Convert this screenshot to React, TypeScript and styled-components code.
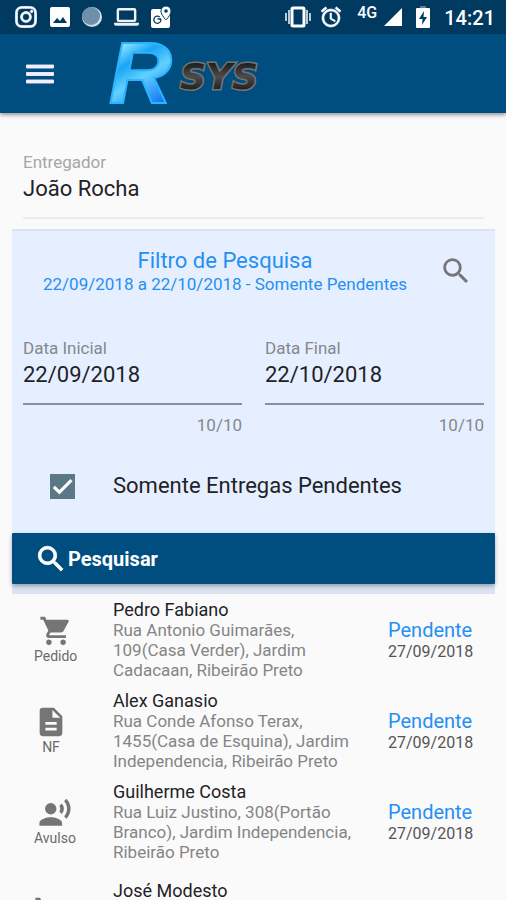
import React, { useState } from "react";
import styled, { createGlobalStyle } from "styled-components";
import { FaInstagram } from "react-icons/fa";
import {
  MdAlarm,
  MdCheck,
  MdDescription,
  MdMenu,
  MdRecordVoiceOver,
  MdSearch,
  MdShoppingCart,
} from "react-icons/md";

const color = {
  status: "#003a61",
  primary: "#004e80",
  page: "#fafafa",
  panel: "#e5efff",
  link: "#2590f2",
  ink: "#1f2226",
  muted: "#84888c",
  icon: "#757575",
};

const GlobalStyle = createGlobalStyle`
  *, *::before, *::after { box-sizing: border-box; }
  body { margin: 0; background: ${color.page}; font-family: Roboto, sans-serif; }
  button, input { font: inherit; }
`;

const Screen = styled.div`
  display: flex;
  flex-direction: column;
  height: 100vh;
  overflow: hidden;
  background: ${color.page};
  color: ${color.ink};
`;

const StatusBar = styled.div`
  display: flex;
  flex: none;
  justify-content: space-between;
  height: 34px;
  padding: 0 11px 0 14px;
  background: ${color.status};
  color: #fff;
`;

const StatusGroup = styled.div<{ $gap: number }>`
  display: flex;
  align-items: center;
  gap: ${(p) => p.$gap}px;
  svg { display: block; }
`;

const Network = styled.span`
  padding-bottom: 8px;
  font-size: 16px;
  line-height: 20px;
  font-weight: 500;
`;

const Clock = styled.time`
  font-size: 20px;
  line-height: 24px;
  font-weight: 500;
  padding-top: 2px;
`;

const AppBar = styled.header`
  display: flex;
  flex: none;
  align-items: center;
  gap: 50px;
  height: 79px;
  padding: 0 22px;
  background: ${color.primary};
  box-shadow: 0 2px 4px rgba(0, 0, 0, 0.4);
`;

const IconButton = styled.button`
  display: flex;
  align-items: center;
  justify-content: center;
  padding: 0;
  border: 0;
  background: none;
  color: inherit;
  cursor: pointer;
`;

const MenuButton = styled(IconButton)`
  color: #f0eefc;
  path:not([fill="none"]) { stroke: currentColor; stroke-width: 0.6px; }
`;

const LogoMark = styled.svg`
  display: block;
  flex: none;
  overflow: visible;
`;

const Main = styled.main`
  display: flex;
  flex-direction: column;
  padding: 37px 11px 0 12px;
`;

const Courier = styled.section`
  margin: 0 11px 10px;
  padding-bottom: 13px;
  border-bottom: 2px solid #ebebeb;
`;

const CourierLabel = styled.div`
  font-size: 17px;
  line-height: 24px;
  color: #a6a6a6;
`;

const CourierName = styled.div`
  font-size: 22px;
  line-height: 30px;
`;

const FilterPanel = styled.form`
  background: ${color.panel};
  border-top: 2px solid #dce2ee;
  box-shadow: 0 10px 0 #dbe4ee;
`;

const FilterHeader = styled.div`
  display: grid;
  grid-template-columns: 1fr 57px;
  align-items: center;
  padding: 17px 11px 0;
  color: ${color.icon};
`;

const FilterSummary = styled.div`
  text-align: center;
  color: ${color.link};
`;

const FilterTitle = styled.h1`
  margin: 0;
  font-size: 22px;
  line-height: 26px;
  font-weight: 400;
`;

const FilterRange = styled.p`
  margin: 0;
  font-size: 17px;
  line-height: 20px;
`;

const Dates = styled.div`
  display: grid;
  grid-template-columns: 1fr 1fr;
  gap: 23px;
  padding: 42px 11px 0;
`;

const FieldLabel = styled.label`
  display: block;
  font-size: 17px;
  line-height: 24px;
  color: ${color.muted};
`;

const FieldInput = styled.input`
  display: block;
  width: 100%;
  height: 45px;
  padding: 0 0 14px;
  border: 0;
  border-bottom: 2px solid #85939f;
  border-radius: 0;
  outline: 0;
  background: none;
  color: ${color.ink};
  font-size: 22px;
  line-height: 28px;
`;

const Counter = styled.div`
  padding-top: 8px;
  text-align: right;
  font-size: 17px;
  line-height: 24px;
  color: ${color.muted};
`;

const PendingRow = styled.label`
  display: flex;
  align-items: center;
  gap: 38px;
  padding: 35px 11px 33px 38px;
  font-size: 22px;
  line-height: 28px;
  cursor: pointer;
`;

const TickBox = styled.span`
  position: relative;
  flex: none;
  width: 25px;
  height: 25px;
  svg {
    position: absolute;
    inset: 0;
    color: #fff;
    pointer-events: none;
  }
  path:not([fill="none"]) { stroke: #fff; stroke-width: 1px; }
`;

const TickInput = styled.input`
  appearance: none;
  display: block;
  width: 100%;
  height: 100%;
  margin: 0;
  border: 2px solid #5b7886;
  &:checked { background: #5b7886; }
`;

const SearchButton = styled.button`
  display: flex;
  align-items: center;
  width: 100%;
  height: 51px;
  padding: 0 22px;
  border: 0;
  border-radius: 1px;
  background: ${color.primary};
  box-shadow: 0 2px 4px rgba(0, 30, 70, 0.35);
  color: #fff;
  font-size: 20px;
  font-weight: 700;
  cursor: pointer;
  path:not([fill="none"]) { stroke: currentColor; stroke-width: 0.6px; }
`;

const AlarmIcon = styled(MdAlarm)`
  path:not([fill="none"]) { stroke: currentColor; stroke-width: 0.6px; }
`;

const Deliveries = styled.ul`
  display: flex;
  flex-direction: column;
  gap: 10px;
  margin: 0;
  padding: 15px 0 0;
  list-style: none;
`;

const Delivery = styled.li<{ $separated?: boolean }>`
  display: grid;
  grid-template-columns: 79px 1fr 83px;
  align-items: start;
  min-height: 81px;
  padding: 0 24px 0 22px;
  margin-top: ${(p) => (p.$separated ? 8 : 0)}px;
`;

const Kind = styled.div`
  display: flex;
  flex-direction: column;
  align-items: center;
  justify-self: start;
  padding-top: 15px;
  font-size: 14px;
  line-height: 16px;
  color: #6a6a6a;
  svg { display: block; color: ${color.icon}; }
`;

const Customer = styled.div`
  padding-right: 28px;
`;

const CustomerName = styled.div`
  font-size: 18px;
  line-height: 21px;
`;

const Address = styled.div`
  font-size: 17px;
  line-height: 20px;
  color: #858585;
`;

const State = styled.div`
  padding-top: 20px;
  text-align: center;
  white-space: nowrap;
`;

const StateName = styled.div`
  font-size: 20px;
  line-height: 23px;
  color: ${color.link};
`;

const StateDate = styled.div`
  font-size: 16px;
  line-height: 19px;
  color: #555;
`;

const PhotoIcon = () => (
  <svg width="20" height="20" viewBox="0 0 20 20" aria-hidden="true">
    <rect width="20" height="20" rx="2" fill="#fff" />
    <path d="M3 16l4-5 3 3 3-4 4 6z" fill={color.status} />
  </svg>
);

const SphereIcon = () => (
  <svg width="20" height="20" viewBox="0 0 20 20" aria-hidden="true">
    <circle cx="10" cy="10" r="10" fill="#d3dde6" />
    <circle cx="9" cy="9" r="9" fill="#6e8fa9" />
  </svg>
);

const LaptopIcon = () => (
  <svg width="25" height="20" viewBox="0 0 26 20" aria-hidden="true">
    <rect x="4" y="2" width="18" height="12" rx="1" fill="none" stroke="#eef1f5" strokeWidth="2.500" />
    <path d="M0 16h26v1q0 2-2 2H2q-2 0-2-2z" fill="#eef1f5" />
  </svg>
);

const MapIcon = () => (
  <svg width="22" height="24" viewBox="0 0 22 24" aria-hidden="true">
    <rect x="0" y="4" width="19" height="19" rx="2" fill="#fff" />
    <path d="M10 14H6.500M9.500 16.500a3.600 3.600 0 1 1-.8-4.600M9.800 14q.3 1.500-.5 2.700" fill="none" stroke={color.status} strokeWidth="1.300" />
    <path d="M15 1a5 5 0 0 0-5 5c0 4 5 9 5 9s5-5 5-9a5 5 0 0 0-5-5z" fill="#fff" stroke={color.status} />
    <circle cx="15" cy="6" r="1.800" fill={color.status} />
  </svg>
);

const VibrateIcon = () => (
  <svg width="26" height="22" viewBox="0 0 26 22" aria-hidden="true">
    <rect x="7" y="2" width="12" height="18" rx="1" fill="none" stroke="#fff" strokeWidth="3" />
    <path d="M4 4v14M22 4v14M1 7v8M25 7v8" stroke="#b9c9d8" strokeWidth="2" />
  </svg>
);

const SignalIcon = () => (
  <svg width="18" height="18" viewBox="0 0 18 18" aria-hidden="true">
    <path d="M18 0v18H0z" fill="#fff" />
  </svg>
);

const BatteryIcon = () => (
  <svg width="14" height="22" viewBox="0 0 14 22" aria-hidden="true">
    <path d="M4 0h6v3H4z" fill="#5c819e" />
    <rect y="2" width="14" height="20" rx="1" fill="#fff" />
    <path d="M8 5l-5 8h3.500L6 19l5-8H7.500z" fill={color.status} />
  </svg>
);

const Logo = () => (
  <LogoMark width="184" height="68" viewBox="0 0 184 68" role="img" aria-label="R SYS">
    <defs>
      <linearGradient id="ice" x1="0.1" y1="0" x2="0.5" y2="1">
        <stop offset="0" stopColor="#1cb4fb" />
        <stop offset="0.22" stopColor="#8fe6ff" />
        <stop offset="0.42" stopColor="#19a5f7" />
        <stop offset="0.62" stopColor="#63d0ff" />
        <stop offset="1" stopColor="#0569ee" />
      </linearGradient>
      <linearGradient id="steel" x1="0" y1="0" x2="0" y2="1">
        <stop offset="0" stopColor="#050505" />
        <stop offset="0.5" stopColor="#4b4b4b" />
        <stop offset="1" stopColor="#080808" />
      </linearGradient>
    </defs>
    <text x="1" y="63" fontFamily="Liberation Sans, sans-serif" fontSize="87" fontWeight="700" fontStyle="italic" fill="url(#ice)" stroke="#29b4ff" strokeWidth="2">
      R
    </text>
    <text x="72" y="49" fontFamily="DejaVu Sans, sans-serif" fontSize="36" fontWeight="700" fontStyle="italic" fill="url(#steel)" stroke="#77736e" strokeWidth="3" paintOrder="stroke">
      SYS
    </text>
  </LogoMark>
);

const kinds = {
  Pedido: MdShoppingCart,
  NF: MdDescription,
  Avulso: MdRecordVoiceOver,
};

type Item = {
  kind: keyof typeof kinds;
  name: string;
  address?: string;
  date?: string;
};

const items: Item[] = [
  {
    kind: "Pedido",
    name: "Pedro Fabiano",
    address: "Rua Antonio Guimarães, 109(Casa Verder), Jardim Cadacaan, Ribeirão Preto",
    date: "27/09/2018",
  },
  {
    kind: "NF",
    name: "Alex Ganasio",
    address: "Rua Conde Afonso Terax, 1455(Casa de Esquina), Jardim Independencia, Ribeirão Preto",
    date: "27/09/2018",
  },
  {
    kind: "Avulso",
    name: "Guilherme Costa",
    address: "Rua Luiz Justino, 308(Portão Branco), Jardim Independencia, Ribeirão Preto",
    date: "27/09/2018",
  },
  { kind: "Pedido", name: "José Modesto" },
];

function DateField({ id, label, initial }: { id: string; label: string; initial: string }) {
  const [value, setValue] = useState(initial);
  return (
    <div>
      <FieldLabel htmlFor={id}>{label}</FieldLabel>
      <FieldInput id={id} maxLength={10} value={value} onChange={(e) => setValue(e.target.value)} />
      <Counter>{value.length}/10</Counter>
    </div>
  );
}

export default function App() {
  const [pending, setPending] = useState(true);
  return (
    <Screen>
      <GlobalStyle />
      <StatusBar>
        <StatusGroup $gap={12}>
          <FaInstagram size={24} stroke="currentColor" strokeWidth={16} />
          <PhotoIcon />
          <SphereIcon />
          <LaptopIcon />
          <MapIcon />
        </StatusGroup>
        <StatusGroup $gap={14}>
          <StatusGroup $gap={8}>
            <VibrateIcon />
            <AlarmIcon size={24} />
          </StatusGroup>
          <StatusGroup $gap={7}>
            <Network>4G</Network>
            <SignalIcon />
          </StatusGroup>
          <StatusGroup $gap={14}>
            <BatteryIcon />
            <Clock>14:21</Clock>
          </StatusGroup>
        </StatusGroup>
      </StatusBar>
      <AppBar>
        <MenuButton type="button" aria-label="Menu">
          <MdMenu size={36} />
        </MenuButton>
        <Logo />
      </AppBar>
      <Main>
        <Courier>
          <CourierLabel>Entregador</CourierLabel>
          <CourierName>João Rocha</CourierName>
        </Courier>
        <FilterPanel onSubmit={(e) => e.preventDefault()}>
          <FilterHeader>
            <FilterSummary>
              <FilterTitle>Filtro de Pesquisa</FilterTitle>
              <FilterRange>22/09/2018 a 22/10/2018 - Somente Pendentes</FilterRange>
            </FilterSummary>
            <IconButton type="button" aria-label="Filtro">
              <MdSearch size={34} />
            </IconButton>
          </FilterHeader>
          <Dates>
            <DateField id="start" label="Data Inicial" initial="22/09/2018" />
            <DateField id="end" label="Data Final" initial="22/10/2018" />
          </Dates>
          <PendingRow>
            <TickBox>
              <TickInput type="checkbox" checked={pending} onChange={(e) => setPending(e.target.checked)} />
              {pending && <MdCheck size={25} />}
            </TickBox>
            Somente Entregas Pendentes
          </PendingRow>
          <SearchButton type="submit">
            <MdSearch size={34} />
            Pesquisar
          </SearchButton>
        </FilterPanel>
        <Deliveries>
          {items.map((item) => {
            const Icon = kinds[item.kind];
            return (
              <Delivery key={item.name} $separated={!item.address}>
                <Kind>
                  <Icon size={34} />
                  {item.address && item.kind}
                </Kind>
                <Customer>
                  <CustomerName>{item.name}</CustomerName>
                  {item.address && <Address>{item.address}</Address>}
                </Customer>
                {item.date && (
                  <State>
                    <StateName>Pendente</StateName>
                    <StateDate>{item.date}</StateDate>
                  </State>
                )}
              </Delivery>
            );
          })}
        </Deliveries>
      </Main>
    </Screen>
  );
}
